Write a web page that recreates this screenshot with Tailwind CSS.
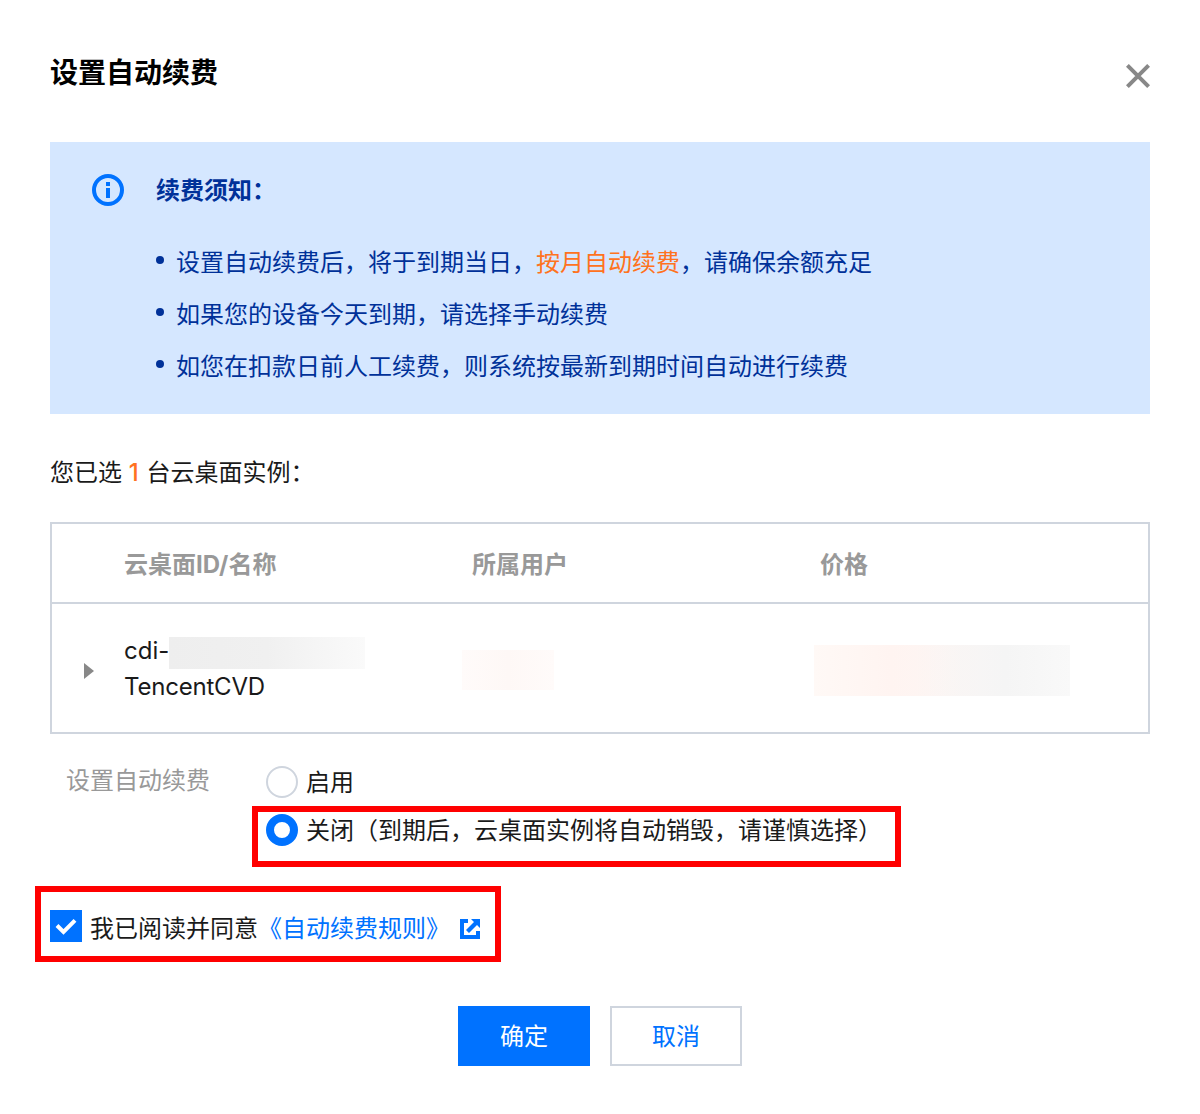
<!DOCTYPE html>
<html lang="zh-CN">
<head>
<meta charset="utf-8">
<title>设置自动续费</title>
<script src="https://cdn.jsdelivr.net/npm/@tailwindcss/browser@4"></script>
</head>
<body class="bg-white">
<main class="relative flex h-[1114px] w-[1200px] flex-col overflow-hidden bg-white px-[50px] font-['Inter','Noto_Sans_CJK_SC',sans-serif] text-2xl text-[#1a1a1a]">
  <header class="mt-[52px] flex h-[42px] items-center justify-between">
    <h1 class="text-[28px] leading-[42px] font-bold text-black">设置自动续费</h1>
    <button class="mt-[6px] size-6" aria-label="关闭">
      <svg class="block size-6" viewBox="0 0 24 24" fill="none" stroke="#888" stroke-width="4"><path d="M1.4 1.4 22.6 22.6M22.6 1.4 1.4 22.6"/></svg>
    </button>
  </header>

  <section class="mt-12 flex h-[272px] bg-[#d5e7ff] pt-[31px] pl-[42px] text-[#003199]">
    <svg class="mt-px size-8 shrink-0" viewBox="0 0 32 32"><circle cx="16" cy="16" r="14" fill="none" stroke="#0072ff" stroke-width="4"/><path fill="#0072ff" d="M14 8h4v4h-4zM14 14h4v10h-4z"/></svg>
    <div class="ml-8">
      <h2 class="leading-9 font-bold">续费须知：</h2>
      <ul class="mt-9 flex flex-col gap-4">
        <li class="flex gap-3 leading-9"><i class="mt-[11px] size-2 rounded-full bg-[#003199]"></i><span>设置自动续费后，将于到期当日，<span class="text-[#ff7220]">按月自动续费</span>，请确保余额充足</span></li>
        <li class="flex gap-3 leading-9"><i class="mt-[11px] size-2 rounded-full bg-[#003199]"></i><span>如果您的设备今天到期，请选择手动续费</span></li>
        <li class="flex gap-3 leading-9"><i class="mt-[11px] size-2 rounded-full bg-[#003199]"></i><span>如您在扣款日前人工续费，则系统按最新到期时间自动进行续费</span></li>
      </ul>
    </div>
  </section>

  <p class="mt-[41px] leading-9">您已选 <span class="mr-px font-medium text-[#ff7220]">1</span> 台云桌面实例：</p>

  <section class="mt-[31px] h-[212px] border-2 border-[#cfd5de]">
    <div class="grid h-20 grid-cols-[348px_348px_1fr] items-center border-b-2 border-[#cfd5de] pt-1 pl-[72px] leading-9 font-bold text-[#999]">
      <span>云桌面ID/名称</span><span>所属用户</span><span>价格</span>
    </div>
    <div class="flex h-32 pl-8">
      <svg class="mt-[59px] h-4 w-[10px] shrink-0" viewBox="0 0 10 16"><path fill="#888" d="M0 0 10 8 0 16z"/></svg>
      <div class="ml-[30px] w-[338px] pt-[29px] leading-9">
        <div class="flex h-9"><span class="w-[45px]">cdi-</span><span class="mt-1 h-8 w-[196px] bg-linear-to-r from-[#eee] via-[#f0f0f0] to-[#fafafa]"></span></div>
        <div class="tracking-[-0.2px]">TencentCVD</div>
      </div>
      <span class="mt-[46px] h-10 w-[92px] bg-linear-to-r from-[#fffbfa] via-[#fef8f6] to-[#fffbfa]"></span>
      <span class="mt-[41px] ml-[260px] h-[51px] w-[256px] bg-linear-to-r from-[#fff9f6] from-0% via-[#fff4f1] via-30% to-[#f9f9f9]"><span class="block h-full w-full bg-linear-to-r from-transparent from-40% via-[#f5f5f5] via-75% to-[#f9f9f9]"></span></span>
    </div>
  </section>

  <section class="mt-8 flex pl-4">
    <span class="-mt-[3px] w-[200px] leading-9 text-[#999]">设置自动续费</span>
    <div class="flex flex-col gap-4">
      <label class="flex h-8 items-center gap-2"><span class="size-8 rounded-full border-2 border-[#cfd5de]"></span><span class="pt-0.5 leading-8">启用</span></label>
      <label class="flex h-8 items-center gap-2"><span class="size-8 rounded-full border-8 border-[#0072ff]"></span><span class="pt-0.5 leading-8">关闭（到期后，云桌面实例将自动销毁，请谨慎选择）</span></label>
    </div>
  </section>

  <section class="mt-16 flex h-8 items-center">
    <svg class="size-8 shrink-0" viewBox="0 0 32 32"><path fill="#0072ff" d="M0 0h32v32H0z"/><path fill="none" stroke="#fff" stroke-width="4" d="m7 15.5 6.5 6.5L25 10.3"/></svg>
    <span class="ml-2 pt-[5px] leading-9">我已阅读并同意<a class="text-[#0072ff]">《自动续费规则》</a></span>
    <svg class="mt-[6px] ml-[10px] size-5 shrink-0" viewBox="0 0 20 20" fill="#0072ff"><path d="M0 0h8v4H4v12h12v-4h4v8H0zM11 0h9v9l-3-3-8 8-3-3 8-8z"/></svg>
  </section>

  <footer class="mt-16 flex justify-center gap-5">
    <button class="h-[60px] w-[132px] bg-[#0072ff] pt-0.5 text-white">确定</button>
    <button class="h-[60px] w-[132px] border-2 border-[#cfd5de] pt-0.5 text-[#0072ff]">取消</button>
  </footer>

  <div class="pointer-events-none absolute top-[805.5px] left-[251.5px] h-[61.5px] w-[649.5px] border-6 border-[#ff0000]"></div>
  <div class="pointer-events-none absolute top-[886px] left-[35px] h-[76px] w-[466px] border-6 border-[#ff0000]"></div>
</main>
</body>
</html>
